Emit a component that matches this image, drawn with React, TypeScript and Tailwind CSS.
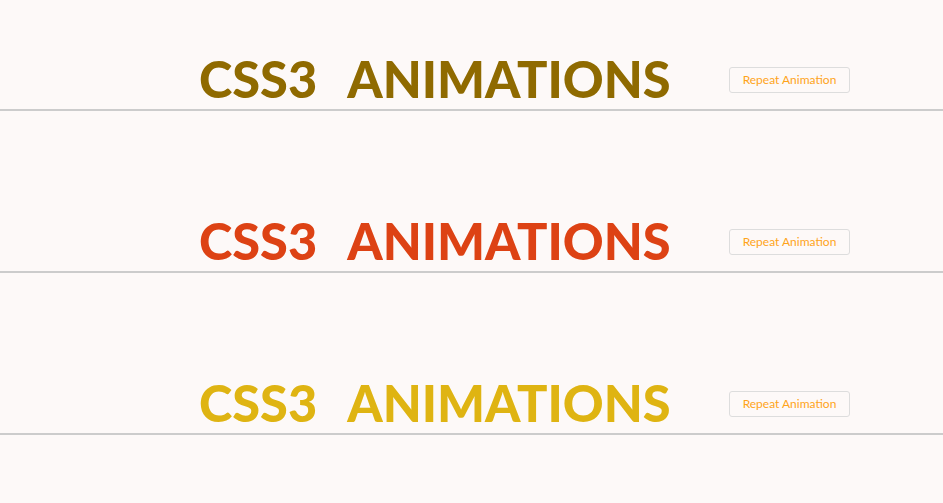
import React from "react";

const sections = [
  { color: "text-[#8f6a00]", h: "h-[111px]" },
  { color: "text-[#dd4214]", h: "h-[162px]" },
  { color: "text-[#dfb412]", h: "h-[162px]" },
];

export default function App() {
  return (
    <div className="min-h-[503px] w-full bg-[#fdf9f8]" style={{ fontFamily: "Lato, 'Liberation Sans', sans-serif" }}>
      {sections.map((s, i) => (
        <div key={i} className={`${s.h} flex items-end border-b-2 border-[#cccccc]`}>
          <div className="flex items-center pl-[199px] pb-[2px]">
            <h1 className={`${s.color} flex w-[470px] gap-[30px] text-[50.5px] font-black leading-[56px]`}>
              <span>CSS3</span>
              <span>ANIMATIONS</span>
            </h1>
            <button className="ml-[60px] mt-[2px] flex h-[26px] w-[121px] items-center justify-center rounded-[3px] border border-[#dddddd] bg-[#fdf9f8] text-[12px] text-[#ffa41a]">
              Repeat Animation
            </button>
          </div>
        </div>
      ))}
    </div>
  );
}
